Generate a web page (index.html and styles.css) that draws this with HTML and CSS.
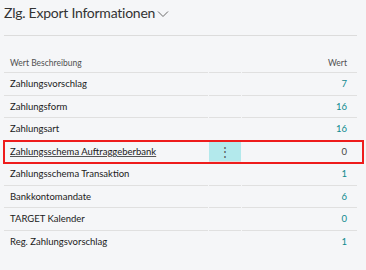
FILE: index.html
```html
<!DOCTYPE html>
<html lang="de">
<head>
    <meta charset="UTF-8">
    <title>Zlg. Export Informationen</title>
    <link rel="stylesheet" href="styles.css">
</head>
<body>
    <div class="part">
        <div class="part-title">
            <span>Zlg. Export Informationen</span>
            <svg class="chevron" width="12" height="8" viewBox="0 0 12 8">
                <path d="M1 1.5 L6 6.5 L11 1.5" fill="none" stroke="#6b6b6b" stroke-width="1"/>
            </svg>
        </div>

        <div class="list">
            <div class="row head">
                <div class="cell desc">Wert Beschreibung</div>
                <div class="cell act"></div>
                <div class="cell val">Wert</div>
            </div>
            <div class="row">
                <div class="cell desc">Zahlungsvorschlag</div>
                <div class="cell act"></div>
                <div class="cell val link">7</div>
            </div>
            <div class="row">
                <div class="cell desc">Zahlungsform</div>
                <div class="cell act"></div>
                <div class="cell val link">16</div>
            </div>
            <div class="row">
                <div class="cell desc">Zahlungsart</div>
                <div class="cell act"></div>
                <div class="cell val link">16</div>
            </div>
            <div class="row selected">
                <div class="cell desc"><u>Zahlungsschema Auftraggeberbank</u></div>
                <div class="cell act"><span class="dots">&#8942;</span></div>
                <div class="cell val">0</div>
            </div>
            <div class="row">
                <div class="cell desc">Zahlungsschema Transaktion</div>
                <div class="cell act"></div>
                <div class="cell val link">1</div>
            </div>
            <div class="row">
                <div class="cell desc">Bankkontomandate</div>
                <div class="cell act"></div>
                <div class="cell val link">6</div>
            </div>
            <div class="row">
                <div class="cell desc">TARGET Kalender</div>
                <div class="cell act"></div>
                <div class="cell val link">0</div>
            </div>
            <div class="row last">
                <div class="cell desc">Reg. Zahlungsvorschlag</div>
                <div class="cell act"></div>
                <div class="cell val link">1</div>
            </div>
        </div>
    </div>
</body>
</html>
```
FILE: styles.css
```css
body {
    margin: 0;
    background-color: #f5f6f8;
    font-family: 'Lato', 'Open Sans', sans-serif;
    color: #212121;
}

.part {
    padding: 0 9px 0 4px;
}

.part-title {
    display: flex;
    align-items: flex-start;
    gap: 2px;
    height: 36px;
    padding-top: 4px;
    box-sizing: border-box;
    font-size: 14px;
    letter-spacing: -0.25px;
    color: #333333;
    border-bottom: 1px solid #dcdcdc;
    margin-bottom: 18px;
}

.chevron {
    margin-top: 6px;
}

.list {
    font-size: 9.5px;
}

.row {
    display: grid;
    grid-template-columns: 204px 32px 1fr;
    column-gap: 1px;
    height: 22.5px;
}

.cell {
    display: flex;
    align-items: center;
    border-bottom: 1px solid #e0e0e0;
}

.last .cell {
    border-bottom: none;
}

.head {
    height: 19px;
    font-size: 8.5px;
    color: #505050;
}

.desc {
    padding-left: 6px;
}

.val {
    justify-content: flex-end;
    padding-right: 10px;
}

.link {
    color: #0f8a8e;
}

.selected {
    position: relative;
}

.selected::after {
    content: "";
    position: absolute;
    left: -1px;
    right: -7px;
    top: -1px;
    bottom: -1px;
    border: 2px solid #ee1c1c;
}

.selected .val {
    color: #444444;
}

.selected .act {
    justify-content: center;
    background-color: #b3e9ec;
    margin: 1px 0;
}

.dots {
    font-size: 12px;
    color: #555555;
}

u {
    text-decoration-color: #555555;
}
```
